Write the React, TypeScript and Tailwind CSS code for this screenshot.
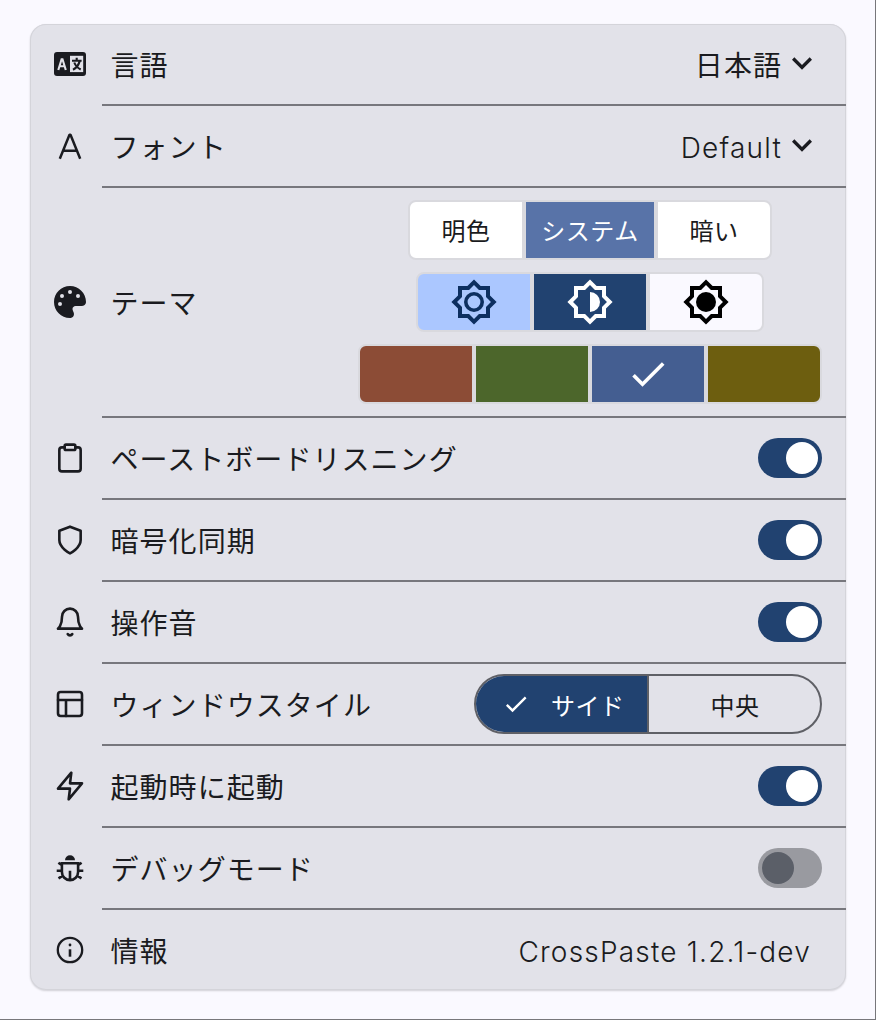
import React from "react";
import { FaPalette } from "react-icons/fa6";

const Stroke = ({ children, w = 1.95 }: { children: React.ReactNode; w?: number }) => (
  <svg viewBox="0 0 24 24" className="size-8" fill="none" stroke="currentColor" strokeWidth={w} strokeLinecap="round" strokeLinejoin="round">
    {children}
  </svg>
);

const LanguageIcon = () => (
  <svg viewBox="0 0 32 24" className="h-6 w-8" fill="none">
    <rect width="32" height="24" rx="3" fill="#1a1b20" />
    <rect x="16" y="3.8" width="13.2" height="16.3" fill="#e2e2e9" />
    <path d="M4.3 18 7.6 7.2h.9L11.8 18M5.5 14.2h5.2" stroke="#e2e2e9" strokeWidth="2.1" />
    <path d="M22.7 5.8v2.8M18 8.8h9.6M25.6 9.4c-1 3.6-3.2 6.6-6.6 8.4M20.3 10.5c1 2.8 3.2 5.3 6.4 7" stroke="#1a1b20" strokeWidth="2.1" />
  </svg>
);

const FontIcon = () => (
  <svg viewBox="0 0 32 32" className="size-8" fill="none" stroke="currentColor" strokeWidth="2.5" strokeLinejoin="bevel">
    <path d="M5.8 28.8 15.5 4.8h1L26.2 28.8M9.3 20.8h13.4" />
  </svg>
);

const BugIcon = () => (
  <svg viewBox="0 0 32 32" className="size-8" fill="none" stroke="currentColor" strokeWidth="2.6">
    <path d="M11 8.2a5 5 0 0 1 10 0z" fill="currentColor" stroke="none" />
    <path d="M7.9 11.3h16.2v8.7a8.1 8.1 0 0 1-16.2 0zM16 18.7V28M2.700 18.700h5.500M23.800 18.700h5.500M4.400 10.700l3.600 2.500M27.600 10.700l-3.600 2.500M4.500 26.300l4.400-2.700M27.500 26.300l-4.400-2.700" />
  </svg>
);

const InfoIcon = () => (
  <svg viewBox="0 0 32 32" className="size-8" fill="none" stroke="currentColor">
    <circle cx="16" cy="16" r="12.2" strokeWidth="2.3" />
    <path d="M16 15.3v7.4" strokeWidth="2.6" />
    <circle cx="16" cy="11" r="1.4" fill="currentColor" stroke="none" />
  </svg>
);

const Chevron = () => (
  <svg viewBox="0 0 24 24" className="mb-0.5 size-10" fill="currentColor">
    <path d="M16.590 8.590 12 13.170 7.410 8.590 6 10l6 6 6-6z" />
  </svg>
);

const Check = ({ className }: { className: string }) => (
  <svg viewBox="0 0 24 24" className={className} fill="currentColor">
    <path d="M9 16.170 4.830 12l-1.420 1.410L9 19 21 7l-1.410-1.410z" />
  </svg>
);

const Sun = ({ level }: { level: "low" | "medium" | "high" }) => (
  <svg viewBox="0 0 24 24" className="size-12" fill="currentColor">
    <path fillRule="evenodd" d="M20 15.310 23.310 12 20 8.690V4h-4.690L12 .690 8.690 4H4v4.690L.690 12 4 15.310V20h4.690L12 23.310 15.310 20H20zM18 14.480V18h-3.520L12 20.480 9.520 18H6v-3.520L3.520 12 6 9.520V6h3.520L12 3.520 14.480 6H18v3.520L20.480 12z" />
    {level === "low" && <circle cx="12" cy="12" r="4.1" fill="none" stroke="currentColor" strokeWidth="1.8" />}
    {level === "medium" && <path d="M12 7v10a5 5 0 0 0 0-10z" />}
    {level === "high" && <circle cx="12" cy="12" r="5" />}
  </svg>
);

const Toggle = ({ on = true }: { on?: boolean }) => (
  <div className={`flex h-10 w-16 items-center rounded-full px-1 ${on ? "justify-end bg-[#214270]" : "justify-start bg-[#999aa0]"}`}>
    <div className={`size-8 rounded-full ${on ? "bg-white" : "bg-[#5b5f68]"}`} />
  </div>
);

const Row = ({ icon, label, children, tall, last }: { icon: React.ReactNode; label: string; children: React.ReactNode; tall?: boolean; last?: boolean }) => (
  <>
    <div className={`flex shrink-0 items-center px-6 ${tall ? "h-[228px]" : "h-20"}`}>
      <div className="flex w-8 justify-center">{icon}</div>
      <div className="ml-[24.5px] flex-1 pt-[3px] whitespace-nowrap">{label}</div>
      {children}
    </div>
    {!last && <div className="ml-[72px] h-0.5 shrink-0 bg-[#77777d]" />}
  </>
);

const cell = "box-content flex h-14 items-center justify-center border-2 border-[#d9d9de]";

export default function App() {
  return (
    <div className="h-[1020px] w-[876px] border-r border-b border-[#77777b] bg-[#faf9ff] pt-6 pl-[30px] font-['Inter','Noto_Sans_CJK_JP',sans-serif] text-[28px] leading-10 font-normal tracking-[1.05px] text-[#1a1b20]">
      <div className="flex h-[966px] w-[816px] flex-col rounded-2xl bg-[#e2e2e9] shadow-[inset_0_0_0_1px_#d4d4da,0_1px_2px_#0000002a]">
        <Row icon={<LanguageIcon />} label="言語">
          <span className="pt-[3px]">日本語</span>
          <Chevron />
        </Row>
        <Row icon={<FontIcon />} label="フォント">
          <span className="pt-[3px] font-light tracking-[1.2px]">Default</span>
          <Chevron />
        </Row>
        <Row icon={<FaPalette className="size-8" />} label="テーマ" tall>
          <div className="flex flex-col items-center gap-3">
            <div className="flex text-2xl tracking-[0.5px]">
              <div className={`${cell} w-28 rounded-l-lg bg-white`}><span className="pt-[3px]">明色</span></div>
              <div className={`${cell} w-32 bg-[#5873a8] text-white`}><span className="pt-[3px]">システム</span></div>
              <div className={`${cell} w-28 rounded-r-lg bg-white`}><span className="pt-[3px]">暗い</span></div>
            </div>
            <div className="flex">
              <div className={`${cell} w-28 rounded-l-lg bg-[#abc7ff] text-[#0d2f60]`}><Sun level="low" /></div>
              <div className={`${cell} w-28 bg-[#214270] text-white`}><Sun level="medium" /></div>
              <div className={`${cell} w-28 rounded-r-lg bg-[#faf9ff] text-black`}><Sun level="high" /></div>
            </div>
            <div className="flex">
              <div className={`${cell} w-28 rounded-l-lg bg-[#8c4c36]`} />
              <div className={`${cell} w-28 bg-[#4c662b]`} />
              <div className={`${cell} w-28 bg-[#445e91] text-white`}><Check className="size-11" /></div>
              <div className={`${cell} w-28 rounded-r-lg bg-[#6d5e0f]`} />
            </div>
          </div>
        </Row>
        <Row
          icon={<Stroke><path d="M16 4h2a2 2 0 0 1 2 2v14a2 2 0 0 1-2 2H6a2 2 0 0 1-2-2V6a2 2 0 0 1 2-2h2" /><rect x="8" y="2" width="8" height="4" rx="1" /></Stroke>}
          label="ペーストボードリスニング"
        >
          <Toggle />
        </Row>
        <Row icon={<Stroke><path d="M12 22s8-4 8-10V5l-8-3-8 3v7c0 6 8 10 8 10z" /></Stroke>} label="暗号化同期">
          <Toggle />
        </Row>
        <Row icon={<Stroke><path d="M18 8A6 6 0 0 0 6 8c0 7-3 9-3 9h18s-3-2-3-9M13.730 21a2 2 0 0 1-3.460 0" /></Stroke>} label="操作音">
          <Toggle />
        </Row>
        <Row icon={<Stroke><rect x="3" y="3" width="18" height="18" rx="2" /><path d="M3 9h18M9 21V9" /></Stroke>} label="ウィンドウスタイル">
          <div className="flex h-[60px] w-[348px] overflow-hidden rounded-full border-2 border-[#5f6066] text-2xl tracking-[0.5px]">
            <div className="flex w-[173px] items-center border-r-2 border-[#5f6066] bg-[#214270] pl-[26px] text-white">
              <Check className="size-7" />
              <span className="ml-[21px] pt-1.5">サイド</span>
            </div>
            <div className="flex flex-1 items-center justify-center pt-1.5 pl-px">中央</div>
          </div>
        </Row>
        <Row icon={<Stroke><path d="M13 2 3 14h9l-1 8 10-12h-9z" /></Stroke>} label="起動時に起動">
          <Toggle />
        </Row>
        <Row icon={<BugIcon />} label="デバッグモード">
          <Toggle on={false} />
        </Row>
        <Row icon={<InfoIcon />} label="情報" last>
          <span className="mr-[11px] pt-[3px] font-light tracking-[1.2px]">CrossPaste 1.2.1-dev</span>
        </Row>
      </div>
    </div>
  );
}
